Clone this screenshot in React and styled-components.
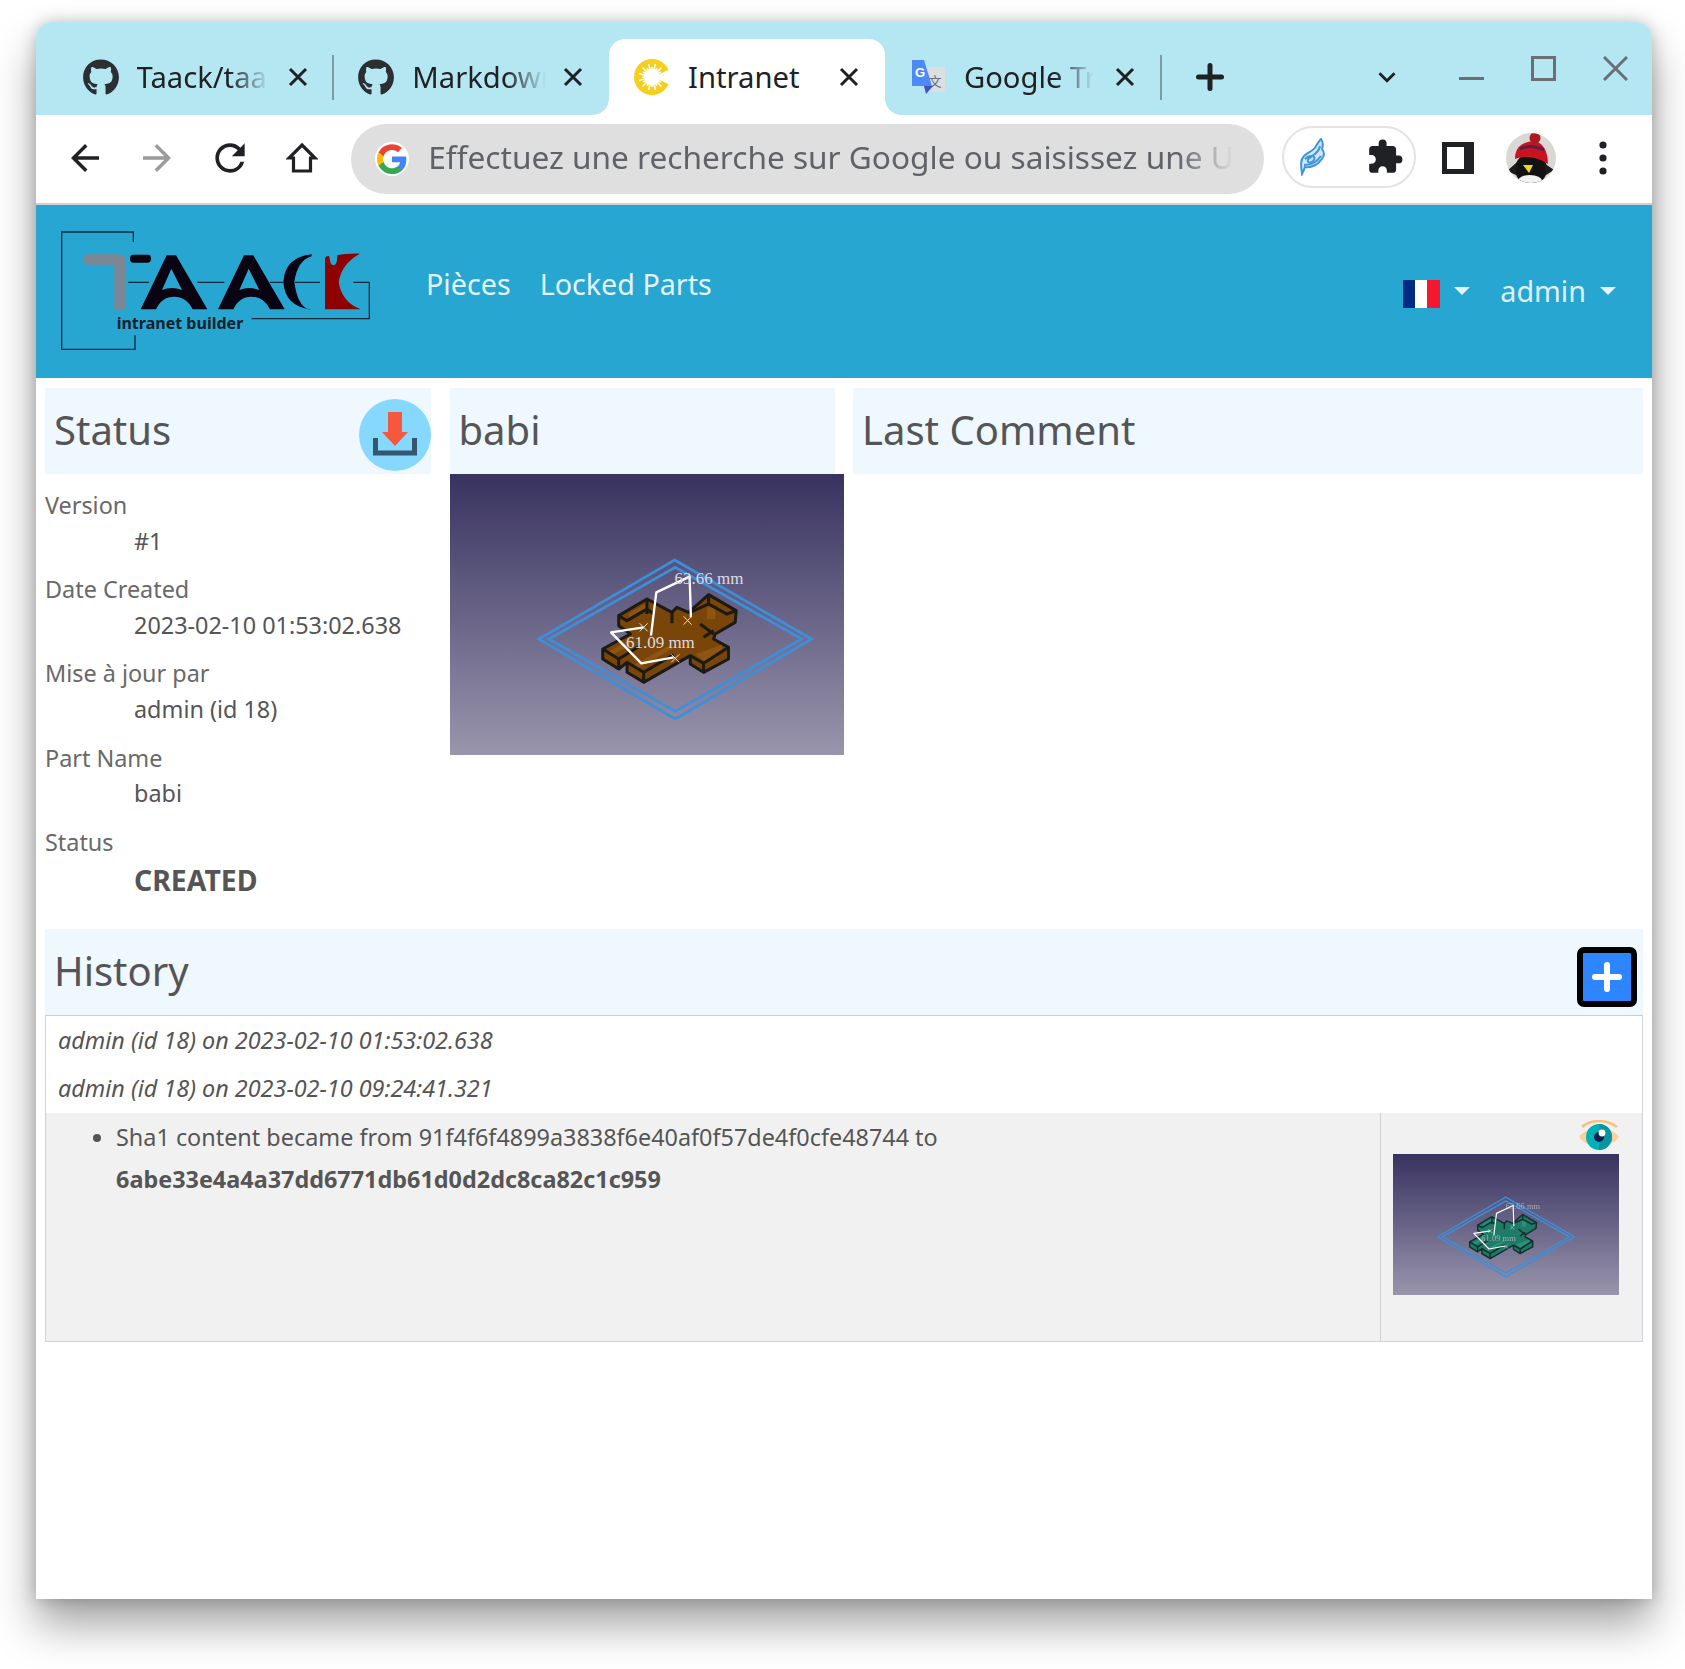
import React from 'react';
import styled, { createGlobalStyle } from 'styled-components';
import { FaGithub } from 'react-icons/fa';
import { MdArrowBack, MdArrowForward, MdRefresh, MdExtension, MdKeyboardArrowDown } from 'react-icons/md';

const GlobalStyle = createGlobalStyle`
  html, body {
    margin: 0;
    padding: 0;
    background: #fff;
    font-family: "Noto Sans", "Open Sans", sans-serif;
  }
  * { box-sizing: border-box; }
`;

const Page = styled.div`
  width: 1685px;
  height: 1669px;
  padding: 22px 33px 70px 36px;
  overflow: hidden;
`;
const Browser = styled.div`
  width: 1616px;
  height: 1577px;
  display: flex;
  flex-direction: column;
  background: #fff;
  border-radius: 16px 16px 0 0;
  overflow: hidden;
  box-shadow: 0 26px 44px rgba(0, 0, 0, 0.36), 0 0 16px rgba(0, 0, 0, 0.22);
`;

/* tab strip */
const TabStrip = styled.div`
  height: 93px;
  flex: none;
  display: flex;
  align-items: flex-start;
  padding: 17px 24px 0 21.5px;
  background: #b5e7f3;
`;
const Tab = styled.div`
  position: relative;
  width: 275.8px;
  height: 76px;
  flex: none;
  display: flex;
  align-items: center;
  padding-left: 25px;
  color: #202124;
  font-size: 29.2px;
  background: ${p => (p.$active ? '#fff' : 'transparent')};
  border-radius: ${p => (p.$active ? '16px 16px 0 0' : '0')};
  ${p => p.$active && `
    &::before, &::after {
      content: '';
      position: absolute;
      bottom: 0;
      width: 16px;
      height: 16px;
    }
    &::before {
      left: -16px;
      background: radial-gradient(circle at 0 0, transparent 15.5px, #fff 16px);
    }
    &::after {
      right: -16px;
      background: radial-gradient(circle at 100% 0, transparent 15.5px, #fff 16px);
    }
  `}
`;
const TabDivider = styled.span`
  position: absolute;
  right: -1px;
  top: 16px;
  width: 2px;
  height: 45px;
  background: #7f9ba3;
`;
const TabIcon = styled.span`
  width: 36px;
  height: 36px;
  flex: none;
  display: flex;
  align-items: center;
  justify-content: center;
  color: #2b2f33;
`;
const TabTitle = styled.span`
  width: ${p => p.$width}px;
  margin-left: 18px;
  white-space: nowrap;
  overflow: hidden;
  ${p => p.$fade && `
    -webkit-mask-image: linear-gradient(to right, #000 70%, transparent 100%);
    mask-image: linear-gradient(to right, #000 70%, transparent 100%);
  `}
`;
const TabClose = styled.svg`
  position: absolute;
  left: 230px;
  top: 28px;
  width: 20px;
  height: 20px;
  stroke: #202124;
  stroke-width: 3;
`;
const NewTab = styled.div`
  width: 48px;
  height: 76px;
  margin-left: 25px;
  flex: none;
  display: flex;
  align-items: center;
  justify-content: center;
`;
const TabMenu = styled.div`
  width: 40px;
  height: 76px;
  margin-left: auto;
  margin-right: 52px;
  display: flex;
  align-items: center;
  justify-content: center;
  color: #202124;
`;
const WindowControls = styled.div`
  display: flex;
  gap: 47px;
  margin-top: 17px;
`;
const WindowIcon = styled.svg`
  width: 25px;
  height: 25px;
  fill: none;
  stroke: #6b6f73;
  stroke-width: 3;
`;

/* toolbar */
const Toolbar = styled.div`
  height: 90px;
  flex: none;
  display: flex;
  align-items: flex-start;
  padding: 9px 0 0 13px;
  background: #fff;
  border-bottom: 2px solid #d2d2d2;
`;
const ToolButton = styled.div`
  width: 72.3px;
  height: 68px;
  flex: none;
  display: flex;
  align-items: center;
  justify-content: center;
  color: ${p => (p.$muted ? '#9b9b9b' : '#202124')};
`;
const Omnibox = styled.div`
  width: 913px;
  height: 70px;
  flex: none;
  margin-left: 13px;
  padding: 0 30px 0 24px;
  display: flex;
  align-items: center;
  gap: 19px;
  border-radius: 35px;
  background: #dfdfdf;
`;
const GoogleBadge = styled.span`
  width: 34px;
  height: 34px;
  flex: none;
  border-radius: 50%;
  background: #fff;
  display: flex;
  align-items: center;
  justify-content: center;
`;
const OmniText = styled.span`
  flex: 1;
  min-width: 0;
  margin-top: -5px;
  overflow: hidden;
  white-space: nowrap;
  font-size: 31.6px;
  color: #5f6368;
  -webkit-mask-image: linear-gradient(to right, #000 93%, transparent 100%);
  mask-image: linear-gradient(to right, #000 93%, transparent 100%);
`;
const ExtensionPill = styled.div`
  width: 134px;
  height: 62px;
  flex: none;
  margin: 2px 6px 0 18px;
  padding: 0 10px 0 14px;
  display: flex;
  align-items: center;
  justify-content: space-between;
  border: 2px solid #e3e3e3;
  border-radius: 31px;
  color: #202124;
`;

/* page header */
const Header = styled.header`
  height: 173px;
  flex: none;
  padding: 17px 36px 0 14px;
  display: flex;
  align-items: flex-start;
  background: #27a6d2;
  font-size: 28.7px;
  color: #dff1f7;
`;
const Nav = styled.nav`
  display: flex;
  gap: 29px;
  margin: 42px 0 0 46px;
  color: #e4f3f8;
`;
const HeaderRight = styled.div`
  margin: 49px 0 0 auto;
  display: flex;
  align-items: center;
`;
const Caret = styled.span`
  width: 0;
  height: 0;
  margin-left: 14px;
  border-left: 8px solid transparent;
  border-right: 8px solid transparent;
  border-top: 8px solid #e4f3f8;
`;
const Flag = styled.span`
  width: 37px;
  height: 28px;
  margin-top: 7px;
  display: block;
  background: linear-gradient(to right, #002b85 33%, #fff 33%, #fff 66%, #f31830 66%);
`;
const UserName = styled.span`
  margin-left: 30px;
`;

/* main content */
const Main = styled.main`
  flex: 1;
  padding: 10px 9px 0;
  color: #555;
  font-size: 23.4px;
`;
const TopGrid = styled.div`
  display: grid;
  grid-template-columns: 386px 385px 1fr;
  column-gap: 18.5px;
`;
const Band = styled.div`
  height: 86px;
  padding-left: 9px;
  display: flex;
  align-items: center;
  justify-content: space-between;
  background: #eff7ff;
`;
const Title = styled.h2`
  margin: 0 0 2px;
  font-size: 40px;
  font-weight: 400;
  line-height: 1;
  color: #555;
`;
const RoundAction = styled.span`
  width: 72px;
  height: 72px;
  margin-top: 8px;
  border-radius: 50%;
  background: #87d8ff;
  display: flex;
  align-items: center;
  justify-content: center;
`;
const Fields = styled.dl`
  margin: 14px 0 0;
`;
const FieldLabel = styled.dt`
  height: 35.5px;
  line-height: 35.5px;
  color: #696969;
`;
const FieldValue = styled.dd`
  height: 48.7px;
  margin: 0 0 0 89px;
  line-height: ${p => (p.$strong ? '40px' : '35.5px')};
  white-space: nowrap;
  font-size: ${p => (p.$strong ? '28.4px' : 'inherit')};
  font-weight: ${p => (p.$strong ? 700 : 400)};
`;
const Shot = styled.div`
  width: ${p => p.$width}px;
  height: ${p => p.$height}px;
  & > svg { display: block; width: 100%; height: 100%; }
`;
const HistorySection = styled.section`
  margin-top: 20px;
`;
const PlusAction = styled.span`
  width: 60px;
  height: 60px;
  margin: 11px 6px 0 0;
  border: 6px solid #000;
  border-radius: 7px;
  background: #2e86ff;
  display: flex;
  align-items: center;
  justify-content: center;
`;
const HistoryTable = styled.div`
  border: 1px solid #cdd3d9;
  border-top-color: #c6ced6;
`;
const HistoryRow = styled.div`
  height: 48.5px;
  padding-left: 12px;
  line-height: 48.5px;
  font-style: italic;
`;
const ChangeRow = styled.div`
  height: 228px;
  display: grid;
  grid-template-columns: 1fr 262px;
  background: #f1f1f1;
`;
const ChangeList = styled.ul`
  margin: 0;
  padding: 3px 0 0 70px;
  list-style: none;
`;
const ChangeItem = styled.li`
  position: relative;
  line-height: 42.5px;
  &::before {
    content: '';
    position: absolute;
    left: -23px;
    top: 18px;
    width: 8px;
    height: 8px;
    border-radius: 50%;
    background: #555;
  }
`;
const PreviewCell = styled.div`
  padding: 7px 23px 0 11px;
  border-left: 1px solid #cfcfcf;
  display: flex;
  flex-direction: column;
  align-items: flex-end;
`;
const EyeIcon = styled.svg`
  width: 40px;
  height: 30px;
  margin-bottom: 4px;
`;

const Close = () => (
  <TabClose viewBox="0 0 20 20">
    <path d="M2 2 L18 18 M18 2 L2 18" />
  </TabClose>
);

const PlusGlyph = ({ size, weight, color }) => (
  <svg width={size} height={size} viewBox={`0 0 ${size} ${size}`} stroke={color} strokeWidth={weight} strokeLinecap="round">
    <path d={`M${weight / 2} ${size / 2} H${size - weight / 2} M${size / 2} ${weight / 2} V${size - weight / 2}`} />
  </svg>
);

const SunIcon = () => {
  const rays = [];
  for (let i = 0; i < 24; i++) {
    const a = (i * Math.PI) / 12;
    const r = i % 2 ? 13.5 : 10;
    rays.push(<line key={i} x1="18" y1="18" x2={18 + Math.cos(a) * r} y2={18 + Math.sin(a) * r} stroke="#fff" strokeWidth="1.6" />);
  }
  return (
    <svg width="36" height="36" viewBox="0 0 36 36">
      <circle cx="18" cy="18" r="18" fill="#f6cf1c" />
      <circle cx="18" cy="18" r="8" fill="#fff" />
      {rays}
      <path d="M20 18 L36 10 V26 Z" fill="#fff" />
    </svg>
  );
};

const TranslateIcon = () => (
  <svg width="36" height="36" viewBox="0 0 36 36">
    <rect x="15" y="8" width="20" height="25" rx="1.5" fill="#dcdfe2" />
    <text x="25" y="27" fontSize="13" textAnchor="middle" fill="#6a6f75" fontFamily="'Noto Sans CJK SC', sans-serif">文</text>
    <path d="M2 1 H14 L22 27 H2 Z" fill="#4a8bf5" />
    <path d="M14 27 H23 L16 35 Z" fill="#3f51c4" />
    <text x="10" y="18" fontSize="13" fontWeight="700" textAnchor="middle" fill="#fff" fontFamily="'Liberation Sans', sans-serif">G</text>
  </svg>
);

const GoogleG = () => (
  <svg width="30" height="30" viewBox="0 0 24 24">
    <path fill="#4285F4" d="M23.5 12.3c0-.8-.1-1.6-.2-2.3H12v4.5h6.5a5.6 5.6 0 0 1-2.4 3.6v3h3.9c2.3-2.1 3.5-5.2 3.5-8.8z" />
    <path fill="#34A853" d="M12 24c3.2 0 6-1.1 8-2.9l-3.9-3c-1.1.7-2.5 1.2-4.1 1.2-3.1 0-5.8-2.1-6.7-5H1.3v3.1A12 12 0 0 0 12 24z" />
    <path fill="#FBBC05" d="M5.3 14.3a7.2 7.2 0 0 1 0-4.6V6.6h-4a12 12 0 0 0 0 10.8l4-3.1z" />
    <path fill="#EA4335" d="M12 4.8c1.8 0 3.3.6 4.6 1.8l3.4-3.4A12 12 0 0 0 1.3 6.6l4 3.1c1-2.9 3.6-4.9 6.7-4.9z" />
  </svg>
);

const HomeIcon = () => (
  <svg width="32" height="32" viewBox="0 0 32 32" fill="none" stroke="#202124" strokeWidth="3.2" strokeLinejoin="miter">
    <path d="M16 3 L29 16 H24.5 V29 H7.5 V16 H3 Z" />
  </svg>
);

const FeatherIcon = () => (
  <svg width="28" height="38" viewBox="0 0 28 38" fill="none" stroke="#3f95dc" strokeWidth="2">
    <path d="M4 36 C3 28 2 22 6 18 C10 14 16 13 18 8 C20 5 21 3 23 1 C26 5 25 8 24 11 C27 15 26 19 23 22 C20 27 12 30 7 29 C6 32 5 34 4 36 Z" fill="#cfe7f8" />
    <path d="M7 21 C12 16 20 18 15 23 C10 27 7 22 13 19 C17 16 21 14 22 8" />
    <path d="M6 27 C12 27 19 24 23 18" />
  </svg>
);

const SidePanelIcon = () => (
  <svg width="32" height="32" viewBox="0 0 32 32">
    <path fill="#202124" fillRule="evenodd" d="M0 0 H32 V32 H0 Z M5 5 V27 H22 V5 Z" />
  </svg>
);

const Avatar = () => (
  <svg width="50" height="50" viewBox="0 0 50 50">
    <defs>
      <clipPath id="avatarClip"><circle cx="25" cy="25" r="25" /></clipPath>
    </defs>
    <g clipPath="url(#avatarClip)">
      <rect width="50" height="50" fill="#d9d8d4" />
      <ellipse cx="25" cy="36" rx="16" ry="16" fill="#121212" />
      <path d="M10 30 L1 38 L10 42 Z M38 30 L48 37 L40 42 Z" fill="#1b1b1b" />
      <ellipse cx="24" cy="48" rx="12" ry="6" fill="#f2f2f2" />
      <path d="M9 26 C9 13 17 9 28 8 C36 9 42 17 42 31 C32 24 18 22 9 26 Z" fill="#c9141f" />
      <path d="M14 16 C22 12 30 13 38 17" stroke="#55204a" strokeWidth="3" fill="none" />
      <circle cx="29" cy="5" r="5.5" fill="#a91a22" />
      <path d="M17 32 H27 L23 40 Z" fill="#f2d625" />
    </g>
  </svg>
);

const FrameLine = styled.path`
  fill: none;
  stroke: #14283c;
  stroke-width: 4;
`;

const Logo = () => (
  <svg width="330" height="135" viewBox="0 0 990 405" style={{ flex: 'none' }}>
    <FrameLine d="M250 60 V30 H35 V382 H255 V340" />
    <FrameLine d="M235 181 H297 M442 181 H523 M660 181 H700 M735 181 H810 M910 181 H958 V290 H605" />
    <path fill="#7b8794" d="M115 97 H205 Q228 97 228 120 V262 H193 V135 Q193 128 185 128 H115 Q100 128 100 113 Q100 97 115 97 Z" />
    <path fill="#0a0312" d="M250 98 H295 Q303 98 303 110 Q303 122 292 122 H250 Q240 122 240 110 Q240 98 250 98 Z" />
    <path id="logoA" fill="#0a0312" fillRule="evenodd" d="M350 100 H378 L472 262 H428 Q410 224 372 224 Q335 224 318 262 H272 Z M364 140 L336 204 Q365 192 396 204 Z" />
    <use href="#logoA" x="232" />
    <path fill="#0a0312" d="M785 97 Q705 105 700 180 Q705 255 785 262 L775 262 Q742 250 733 180 Q742 115 785 103 Z" />
    <path fill="#8f0000" d="M825 108 Q830 100 838 103 Q840 130 850 130 Q862 130 862 100 Q890 94 930 95 Q875 125 866 180 Q875 240 932 262 H825 Z" />
    <text x="200" y="322" fontSize="46" fontWeight="700" fill="#14202c" textLength="380" lengthAdjust="spacingAndGlyphs" fontFamily="'Noto Sans', sans-serif">intranet builder</text>
  </svg>
);

const DownloadIcon = () => (
  <svg width="46" height="46" viewBox="0 0 46 46">
    <path fill="#f5573f" d="M16 0 H30 V20 H36 L23 34 L10 20 H16 Z" />
    <path fill="none" stroke="#35566f" strokeWidth="5" d="M3.5 26 V41 H42.5 V26" />
  </svg>
);

/* the FreeCAD render, wide shows the crop used for the thumbnail */
const PartRender = ({ id, wide, floor, top, lineColor, labelOpacity }) => (
  <svg viewBox={wide ? '27 10 1356 843' : '28 10 1184 843'} preserveAspectRatio="none">
    <defs>
      <linearGradient id={id} x1="0" y1="0" x2="0" y2="1">
        <stop offset="0" stopColor="#37315f" />
        <stop offset="1" stopColor="#9a96ad" />
      </linearGradient>
    </defs>
    <rect x="0" y="0" width="1400" height="860" fill={`url(#${id})`} />
    <g fill="none" stroke="#3b8fdc" strokeWidth="8">
      <path d="M703 268 L1115 505 L705 745 L295 505 Z" />
      <path d="M705 290 L1085 505 L705 722 L325 505 Z" />
    </g>
    <path fill={floor} stroke={lineColor} strokeWidth="9" strokeLinejoin="round" d="M535 435 L620 385 L695 425 L710 410 L745 425 L805 372 L888 420 L885 455 L825 490 L820 505 L865 530 L865 565 L790 605 L750 580 L750 555 L610 635 L560 605 L560 575 L535 595 L487 565 L487 535 L570 490 L535 465 Z" />
    <path fill={top} d="M800 410 h25 v35 h-25 Z M565 428 l50 -28 v20 l-50 28 Z M500 545 l70 -38 l14 8 l-70 40 Z M575 585 l110 -60 l14 8 l-110 62 Z M765 550 l80 -28 v22 l-50 30 Z" />
    <g fill="none" stroke={lineColor} strokeWidth="9">
      <path d="M535 435 L560 450 L620 415 L640 430 M620 385 L620 430 M695 425 L695 458" />
      <path d="M750 425 L805 400 L860 430 L888 420 M805 372 L805 400" />
      <path d="M487 535 L535 565 L600 525 M535 565 L535 595" />
      <path d="M560 575 L610 605 L700 552 M610 605 L610 635" />
      <path d="M750 555 L790 578 L865 530 M790 578 L790 605" />
      <path d="M780 460 L820 490 M790 500 L820 480" />
    </g>
    <g fill="none" stroke="#fff" strokeWidth="7" strokeLinejoin="round">
      <path d="M632 495 L648 365 L748 318 L752 440" />
      <path d="M610 470 L512 485 L603 578 L700 560" />
    </g>
    <g fill="none" stroke="#e8e2d4" strokeWidth="3">
      <path d="M730 437 L754 462 M754 437 L730 462" />
      <path d="M598 458 L622 482 M622 458 L598 482" />
      <path d="M693 551 L717 575 M717 551 L693 575" />
    </g>
    <g fill="#dcdce6" fontSize="51" opacity={labelOpacity} fontFamily="'Liberation Serif', serif">
      <text x="703" y="341">63.66 mm</text>
      <text x="557" y="532">61.09 mm</text>
    </g>
  </svg>
);

const Eye = () => (
  <EyeIcon viewBox="0 0 40 30">
    <path d="M3 7 C12 -1 27 -1 38 7" fill="none" stroke="#fdbf7c" strokeWidth="2.5" />
    <path d="M0 17 C8 6 31 5 40 17 C31 29 8 29 0 17 Z" fill="#fdd19a" />
    <circle cx="20" cy="17" r="13" fill="#00b1b7" />
    <path d="M20 4 A13 13 0 0 1 20 30 Z" fill="#0a94a2" />
    <circle cx="20" cy="17" r="5" fill="#10204f" />
    <circle cx="23" cy="13" r="3.4" fill="#fff" />
  </EyeIcon>
);

const fields = [
  ['Version', '#1'],
  ['Date Created', '2023-02-10 01:53:02.638'],
  ['Mise à jour par', 'admin (id 18)'],
  ['Part Name', 'babi'],
];

const App = () => (
  <Page>
    <GlobalStyle />
    <Browser>
      <TabStrip>
        <Tab>
          <TabIcon><FaGithub size={37} /></TabIcon>
          <TabTitle $width={132} $fade>Taack/taack-ui</TabTitle>
          <Close />
          <TabDivider />
        </Tab>
        <Tab>
          <TabIcon><FaGithub size={37} /></TabIcon>
          <TabTitle $width={134} $fade>Markdown</TabTitle>
          <Close />
        </Tab>
        <Tab $active>
          <TabIcon><SunIcon /></TabIcon>
          <TabTitle $width={130}>Intranet</TabTitle>
          <Close />
        </Tab>
        <Tab>
          <TabIcon><TranslateIcon /></TabIcon>
          <TabTitle $width={130} $fade>Google Traduction</TabTitle>
          <Close />
          <TabDivider />
        </Tab>
        <NewTab><PlusGlyph size={28} weight={5} color="#202124" /></NewTab>
        <TabMenu><MdKeyboardArrowDown size={34} /></TabMenu>
        <WindowControls>
          <WindowIcon viewBox="0 0 25 25"><path d="M0 22.5 H25" /></WindowIcon>
          <WindowIcon viewBox="0 0 25 25"><path d="M1.5 1.5 H23.5 V23.5 H1.5 Z" /></WindowIcon>
          <WindowIcon viewBox="0 0 25 25"><path d="M1 1 L24 24 M24 1 L1 24" /></WindowIcon>
        </WindowControls>
      </TabStrip>

      <Toolbar>
        <ToolButton><MdArrowBack size={42} /></ToolButton>
        <ToolButton $muted><MdArrowForward size={42} /></ToolButton>
        <ToolButton><MdRefresh size={44} /></ToolButton>
        <ToolButton><HomeIcon /></ToolButton>
        <Omnibox>
          <GoogleBadge><GoogleG /></GoogleBadge>
          <OmniText>Effectuez une recherche sur Google ou saisissez une URL</OmniText>
        </Omnibox>
        <ExtensionPill>
          <FeatherIcon />
          <MdExtension size={38} />
        </ExtensionPill>
        <ToolButton><SidePanelIcon /></ToolButton>
        <ToolButton><Avatar /></ToolButton>
        <ToolButton>
          <svg width="8" height="34" viewBox="0 0 8 34" fill="#202124">
            <circle cx="4" cy="4" r="3.6" />
            <circle cx="4" cy="17" r="3.6" />
            <circle cx="4" cy="30" r="3.6" />
          </svg>
        </ToolButton>
      </Toolbar>

      <Header>
        <Logo />
        <Nav>
          <span>Pièces</span>
          <span>Locked Parts</span>
        </Nav>
        <HeaderRight>
          <Flag />
          <Caret />
          <UserName>admin</UserName>
          <Caret />
        </HeaderRight>
      </Header>

      <Main>
        <TopGrid>
          <div>
            <Band>
              <Title>Status</Title>
              <RoundAction><DownloadIcon /></RoundAction>
            </Band>
            <Fields>
              {fields.map(([label, value]) => (
                <React.Fragment key={label}>
                  <FieldLabel>{label}</FieldLabel>
                  <FieldValue>{value}</FieldValue>
                </React.Fragment>
              ))}
              <FieldLabel>Status</FieldLabel>
              <FieldValue $strong>CREATED</FieldValue>
            </Fields>
          </div>
          <div>
            <Band><Title>babi</Title></Band>
            <Shot $width={394} $height={281}>
              <PartRender id="partBig" floor="#7a4508" top="#8e5411" lineColor="#1c1a14" labelOpacity={1} />
            </Shot>
          </div>
          <div>
            <Band><Title>Last Comment</Title></Band>
          </div>
        </TopGrid>

        <HistorySection>
          <Band>
            <Title>History</Title>
            <PlusAction><PlusGlyph size={30} weight={6} color="#fff" /></PlusAction>
          </Band>
          <HistoryTable>
            <HistoryRow>admin (id 18) on 2023-02-10 01:53:02.638</HistoryRow>
            <HistoryRow>admin (id 18) on 2023-02-10 09:24:41.321</HistoryRow>
            <ChangeRow>
              <ChangeList>
                <ChangeItem>
                  Sha1 content became from 91f4f6f4899a3838f6e40af0f57de4f0cfe48744 to <br />
                  <b>6abe33e4a4a37dd6771db61d0d2dc8ca82c1c959</b>
                </ChangeItem>
              </ChangeList>
              <PreviewCell>
                <Eye />
                <Shot $width={226} $height={141}>
                  <PartRender id="partThumb" wide floor="#1f7a68" top="#2a8f7c" lineColor="#12302e" labelOpacity={0.6} />
                </Shot>
              </PreviewCell>
            </ChangeRow>
          </HistoryTable>
        </HistorySection>
      </Main>
    </Browser>
  </Page>
);

export default App;
